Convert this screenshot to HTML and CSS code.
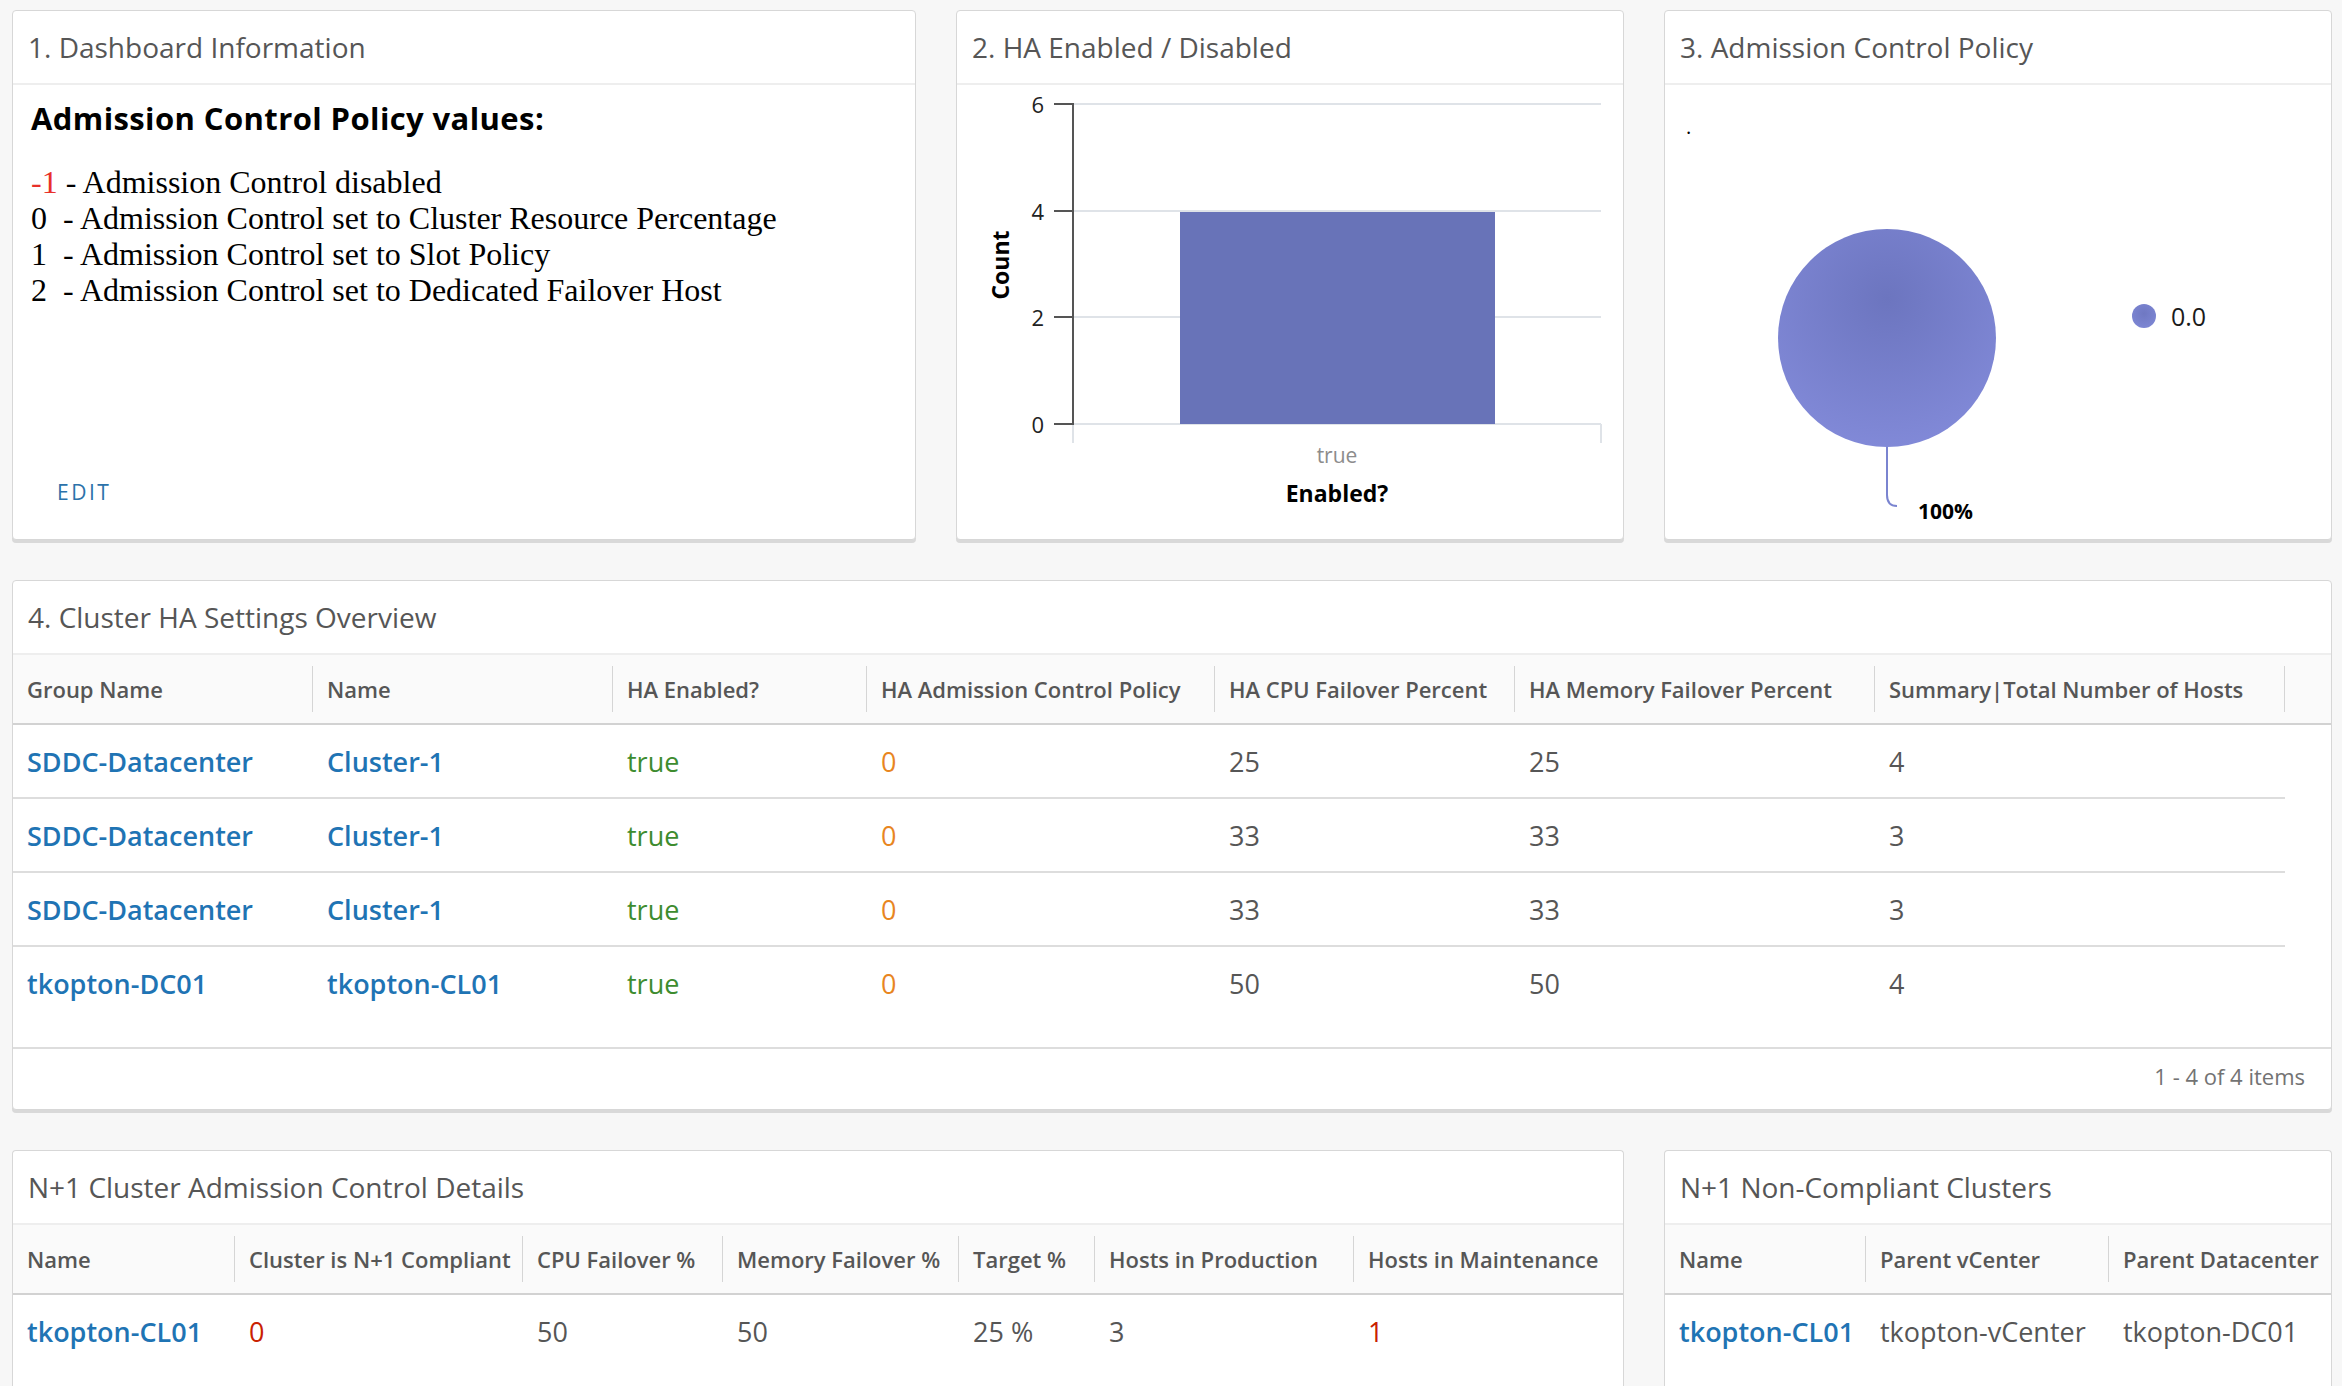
FILE: index.html
```html
<!DOCTYPE html>
<html lang="en">
<head>
<meta charset="utf-8">
<title>Cluster HA Dashboard</title>
<link rel="stylesheet" href="styles.css">
</head>
<body>
<main class="dashboard">

  <section class="card card-info">
    <header class="card-header">1. Dashboard Information</header>
    <div class="card-body info-body">
      <h2 class="policy-heading">Admission Control Policy values:</h2>
      <div class="policy-list">
        <div><span class="neg">-1</span> - Admission Control disabled</div>
        <div>0&nbsp; - Admission Control set to Cluster Resource Percentage</div>
        <div>1&nbsp; - Admission Control set to Slot Policy</div>
        <div>2&nbsp; - Admission Control set to Dedicated Failover Host</div>
      </div>
      <button class="btn-link" type="button">EDIT</button>
    </div>
  </section>

  <section class="card">
    <header class="card-header">2. HA Enabled / Disabled</header>
    <div class="card-body">
      <svg class="chart" width="666" height="454" viewBox="0 0 666 454">
        <g class="grid">
          <line x1="116" y1="19" x2="644" y2="19"/>
          <line x1="116" y1="126" x2="644" y2="126"/>
          <line x1="116" y1="232" x2="644" y2="232"/>
          <line x1="116" y1="339" x2="644" y2="339"/>
          <line x1="116" y1="339" x2="116" y2="358"/>
          <line x1="644" y1="339" x2="644" y2="358"/>
        </g>
        <rect class="bar" x="223" y="127" width="315" height="212"/>
        <g class="axis">
          <line x1="116" y1="18" x2="116" y2="340"/>
          <line x1="97" y1="19" x2="116" y2="19"/>
          <line x1="97" y1="126" x2="116" y2="126"/>
          <line x1="97" y1="232" x2="116" y2="232"/>
          <line x1="97" y1="339" x2="116" y2="339"/>
        </g>
        <g class="tick-label">
          <text x="87" y="19">6</text>
          <text x="87" y="126">4</text>
          <text x="87" y="232">2</text>
          <text x="87" y="339">0</text>
        </g>
        <text class="cat-label" x="380" y="370">true</text>
        <text class="axis-title" x="380" y="408">Enabled?</text>
        <text class="axis-title" x="43" y="180" transform="rotate(-90 43 180)">Count</text>
      </svg>
    </div>
  </section>

  <section class="card">
    <header class="card-header">3. Admission Control Policy</header>
    <div class="card-body">
      <svg class="chart" width="666" height="454" viewBox="0 0 666 454">
        <defs>
          <radialGradient id="pieGrad" cx="0.5" cy="0.32" r="0.75">
            <stop offset="0" stop-color="#6c75bf"/>
            <stop offset="1" stop-color="#838bda"/>
          </radialGradient>
          <radialGradient id="dotGrad" cx="0.5" cy="0.4" r="0.7">
            <stop offset="0" stop-color="#6f78c2"/>
            <stop offset="1" stop-color="#7f88d6"/>
          </radialGradient>
        </defs>
        <text class="pie-dot" x="21" y="41">.</text>
        <circle cx="222" cy="253" r="109" fill="url(#pieGrad)"/>
        <path class="leader" d="M222 362 V410 Q222 421 232 421"/>
        <text class="pie-label" x="253" y="426">100%</text>
        <circle cx="479" cy="231" r="12" fill="url(#dotGrad)"/>
        <text class="legend-label" x="506" y="231">0.0</text>
      </svg>
    </div>
  </section>

  <section class="card card-wide">
    <header class="card-header">4. Cluster HA Settings Overview</header>
    <div class="dg dg-ha">
      <div class="dg-head">
        <div class="c">Group Name</div>
        <div class="c">Name</div>
        <div class="c">HA Enabled?</div>
        <div class="c">HA Admission Control Policy</div>
        <div class="c">HA CPU Failover Percent</div>
        <div class="c">HA Memory Failover Percent</div>
        <div class="c">Summary|Total Number of Hosts</div>
      </div>
      <div class="dg-body">
        <div class="dg-row">
          <div class="c link">SDDC-Datacenter</div>
          <div class="c link">Cluster-1</div>
          <div class="c ok">true</div>
          <div class="c warn">0</div>
          <div class="c">25</div>
          <div class="c">25</div>
          <div class="c">4</div>
        </div>
        <div class="dg-row">
          <div class="c link">SDDC-Datacenter</div>
          <div class="c link">Cluster-1</div>
          <div class="c ok">true</div>
          <div class="c warn">0</div>
          <div class="c">33</div>
          <div class="c">33</div>
          <div class="c">3</div>
        </div>
        <div class="dg-row">
          <div class="c link">SDDC-Datacenter</div>
          <div class="c link">Cluster-1</div>
          <div class="c ok">true</div>
          <div class="c warn">0</div>
          <div class="c">33</div>
          <div class="c">33</div>
          <div class="c">3</div>
        </div>
        <div class="dg-row">
          <div class="c link">tkopton-DC01</div>
          <div class="c link">tkopton-CL01</div>
          <div class="c ok">true</div>
          <div class="c warn">0</div>
          <div class="c">50</div>
          <div class="c">50</div>
          <div class="c">4</div>
        </div>
      </div>
      <div class="dg-foot">1 - 4 of 4 items</div>
    </div>
  </section>

  <section class="card card-double card-cut">
    <header class="card-header">N+1 Cluster Admission Control Details</header>
    <div class="dg dg-n1">
      <div class="dg-head">
        <div class="c">Name</div>
        <div class="c">Cluster is N+1 Compliant</div>
        <div class="c">CPU Failover %</div>
        <div class="c">Memory Failover %</div>
        <div class="c">Target %</div>
        <div class="c">Hosts in Production</div>
        <div class="c">Hosts in Maintenance</div>
      </div>
      <div class="dg-body">
        <div class="dg-row">
          <div class="c link">tkopton-CL01</div>
          <div class="c bad">0</div>
          <div class="c">50</div>
          <div class="c">50</div>
          <div class="c">25 %</div>
          <div class="c">3</div>
          <div class="c bad">1</div>
        </div>
      </div>
    </div>
  </section>

  <section class="card card-cut">
    <header class="card-header">N+1 Non-Compliant Clusters</header>
    <div class="dg dg-nc">
      <div class="dg-head">
        <div class="c">Name</div>
        <div class="c">Parent vCenter</div>
        <div class="c">Parent Datacenter</div>
      </div>
      <div class="dg-body">
        <div class="dg-row">
          <div class="c link">tkopton-CL01</div>
          <div class="c">tkopton-vCenter</div>
          <div class="c">tkopton-DC01</div>
        </div>
      </div>
    </div>
  </section>

</main>
</body>
</html>
```

FILE: styles.css
```css
* { box-sizing: border-box; }

html, body {
  margin: 0;
  padding: 0;
  background: #f7f7f7;
}

body {
  font-family: "Open Sans", "Noto Sans", "Liberation Sans", sans-serif;
  color: #565656;
  height: 100vh;
  overflow: hidden;
}

.dashboard {
  display: grid;
  grid-template-columns: 904px 668px 668px;
  grid-template-rows: 530px 530px 1fr;
  gap: 40px;
  height: 100vh;
  padding: 10px 10px 0 12px;
  overflow: hidden;
}

.card {
  background: #fff;
  border: 1px solid #d7d7d7;
  border-radius: 4px;
  box-shadow: 0 3px 0 0 #d9d9d9;
  display: flex;
  flex-direction: column;
  overflow: hidden;
}

.card-cut {
  border-bottom: 0;
  border-bottom-left-radius: 0;
  border-bottom-right-radius: 0;
  box-shadow: none;
}

.card-wide { grid-column: 1 / -1; }
.card-double { grid-column: 1 / 3; }

.card-header {
  height: 74px;
  flex: none;
  border-bottom: 2px solid #eeeeee;
  padding: 0 15px;
  display: flex;
  align-items: center;
  font-size: 28px;
  font-weight: 400;
  color: #565656;
}

.card-body {
  flex: 1;
  display: flex;
  flex-direction: column;
}

/* Panel 1 */
.info-body {
  padding: 15px 17px 29px 18px;
}

.policy-heading {
  margin: 0 0 28px;
  font-size: 31px;
  line-height: 36px;
  font-weight: 700;
  letter-spacing: 0.4px;
  color: #000;
}

.policy-list {
  font-family: "Liberation Serif", "Times New Roman", serif;
  font-size: 32px;
  line-height: 36px;
  color: #000;
}

.neg { color: #e8302a; }

.btn-link {
  margin-top: auto;
  align-self: flex-start;
  margin-left: 26px;
  padding: 0;
  border: 0;
  background: none;
  font-family: inherit;
  font-size: 21px;
  line-height: 36px;
  font-weight: 500;
  letter-spacing: 0.12em;
  color: #2b72aa;
}

/* Charts */
.chart { display: block; }
.chart text { font-family: "Open Sans", "Noto Sans", sans-serif; dominant-baseline: central; }

.grid line { stroke: #dfe3e8; stroke-width: 2; }
.axis line { stroke: #555; stroke-width: 2; }
.bar { fill: #6873b8; }
.tick-label text { font-size: 22px; fill: #222; text-anchor: end; }
.cat-label { font-size: 21px; fill: #8c8c8c; text-anchor: middle; }
.axis-title { font-size: 23px; font-weight: 700; fill: #000; text-anchor: middle; }

.pie-dot { font-size: 20px; fill: #000; dominant-baseline: auto; }
.leader { fill: none; stroke: #7a84d0; stroke-width: 2; }
.pie-label { font-size: 21px; font-weight: 700; fill: #000; }
.legend-label { font-size: 25px; fill: #1a1a1a; }

/* Datagrids */
.dg {
  flex: 1;
  display: flex;
  flex-direction: column;
}

.dg-head {
  display: flex;
  flex: none;
  background: #fafafa;
  border-bottom: 2px solid #d2d2d2;
  padding: 11px 0;
}

.dg-head .c {
  height: 46px;
  border-right: 1px solid #d5d5d5;
  font-size: 22px;
  font-weight: 600;
  color: #565656;
}

.c {
  flex: none;
  display: flex;
  align-items: center;
  padding-left: 14px;
  white-space: nowrap;
  overflow: hidden;
}

.dg-body {
  display: flex;
  flex-direction: column;
  align-items: flex-start;
}

.dg-row {
  display: flex;
  height: 72px;
}

.dg-row + .dg-row { border-top: 2px solid #dddddd; height: 74px; }

.dg-row .c {
  font-size: 27px;
  color: #565656;
}

.dg-row .link { color: #1f74b4; font-weight: 600; }
.dg-row .ok { color: #3d8c2f; }
.dg-row .warn { color: #e8861f; }
.dg-row .bad { color: #c92100; }

.dg-ha .dg-body { min-height: 322px; }

.dg-foot {
  border-top: 2px solid #dddddd;
  flex: 1;
  display: flex;
  align-items: center;
  justify-content: flex-end;
  padding: 0 26px 6px 0;
  font-size: 22px;
  color: #737373;
}

/* Column widths */
.dg-ha .c:nth-child(1) { width: 300px; }
.dg-ha .c:nth-child(2) { width: 300px; }
.dg-ha .c:nth-child(3) { width: 254px; }
.dg-ha .c:nth-child(4) { width: 348px; }
.dg-ha .c:nth-child(5) { width: 300px; }
.dg-ha .c:nth-child(6) { width: 360px; }
.dg-ha .c:nth-child(7) { width: 410px; }

.dg-n1 .c:nth-child(1) { width: 222px; }
.dg-n1 .c:nth-child(2) { width: 288px; }
.dg-n1 .c:nth-child(3) { width: 200px; }
.dg-n1 .c:nth-child(4) { width: 236px; }
.dg-n1 .c:nth-child(5) { width: 136px; }
.dg-n1 .c:nth-child(6) { width: 259px; }
.dg-n1 .c:nth-child(7) { width: 269px; border-right: 0; }

.dg-nc .c:nth-child(1) { width: 201px; }
.dg-nc .c:nth-child(2) { width: 243px; }
.dg-nc .c:nth-child(3) { width: 222px; border-right: 0; }
```
